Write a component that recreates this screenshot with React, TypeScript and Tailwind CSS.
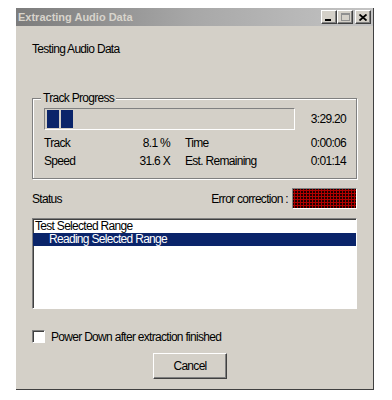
import React from 'react';

const raised =
  'border border-t-white border-l-white border-r-[#404040] border-b-[#404040] shadow-[inset_-1px_-1px_0_#808080]';
const sunken =
  'border border-t-[#808080] border-l-[#808080] border-r-white border-b-white shadow-[inset_1px_1px_0_#404040]';

const TitleButton = ({ children }: { children: React.ReactNode }) => (
  <div className={`w-[16px] h-[14px] bg-[#d4d0c8] flex items-center justify-center ${raised}`}>{children}</div>
);

const App = () => {
  return (
    <div className="w-[392px] h-[400px] bg-white pt-[8px] pl-[16px] font-['Liberation_Sans',Arial,sans-serif] text-[12px] leading-[14px] tracking-[-0.7px] text-black">
      <div className="w-[358px] h-[382px] bg-[#d4d0c8] flex flex-col border-r border-b border-r-[#404040] border-b-[#404040]">
        {/* caption */}
        <div className="h-[18px] flex items-center pl-[2px] pr-[2px] bg-gradient-to-r from-[#7c7c7c] via-[#a8a8a8] to-[#c4c4c4]">
          <span className="font-bold text-[11px] tracking-[0px] text-[#d8d4cc]">Extracting Audio Data</span>
          <div className="ml-auto flex items-center">
            <TitleButton>
              <div className="w-[6px] h-[2px] bg-black mt-[6px] -ml-[2px]" />
            </TitleButton>
            <TitleButton>
              <div className="w-[9px] h-[8px] border border-t-2 border-[#909090]" />
            </TitleButton>
            <div className="w-[2px]" />
            <TitleButton>
              <svg width="8" height="7" viewBox="0 0 8 7">
                <path d="M0.5 0.5 L7.5 6.5 M7.5 0.5 L0.5 6.5" stroke="#000" strokeWidth="1.8" />
              </svg>
            </TitleButton>
          </div>
        </div>

        <div className="flex-1 flex flex-col pl-[16px] pr-[16px]">
          <div className="mt-[16px] h-[14px]">Testing Audio Data</div>

          {/* Track Progress group */}
          <div className="relative mt-[42px] border border-[#808080] shadow-[inset_1px_1px_0_#fff,1px_1px_0_#fff] pt-[9px] pb-[8px] pl-[11px] pr-[10px]">
            <span className="absolute -top-[8px] left-[8px] px-[2px] bg-[#d4d0c8]">Track Progress</span>
            <div className="flex items-center">
              <div className={`w-[251px] h-[22px] bg-[#d4d0c8] flex items-center gap-[2px] pl-[2px] ${sunken} shadow-none`}>
                <div className="w-[12px] h-[18px] bg-[#0a246a]" />
                <div className="w-[12px] h-[18px] bg-[#0a246a]" />
              </div>
              <span className="ml-auto">3:29.20</span>
            </div>
            <div className="flex mt-[4px] leading-[18px]">
              <div className="w-[126px] flex flex-col">
                <div className="flex justify-between"><span>Track</span><span>8.1 %</span></div>
                <div className="flex justify-between"><span>Speed</span><span>31.6 X</span></div>
              </div>
              <div className="flex-1 flex flex-col ml-[15px]">
                <div className="flex justify-between"><span>Time</span><span>0:00:06</span></div>
                <div className="flex justify-between"><span>Est. Remaining</span><span>0:01:14</span></div>
              </div>
            </div>
          </div>

          {/* status row */}
          <div className="flex items-center mt-[9px] h-[21px]">
            <span>Status</span>
            <span className="ml-auto mr-[4px]">Error correction :</span>
            <div
              className={`w-[65px] h-[21px] bg-[#1c0000] bg-[radial-gradient(circle,#b00000_1px,transparent_1.2px)] bg-[length:3px_3px] ${sunken} shadow-none`}
            />
          </div>

          {/* list */}
          <div className={`mt-[9px] h-[91px] bg-white pt-[1px] ${sunken}`}>
            <div className="pl-[2px] leading-[13px]">Test Selected Range</div>
            <div className="pl-[16px] leading-[13px] bg-[#0a246a] text-white">Reading Selected Range</div>
          </div>

          {/* checkbox */}
          <div className="flex items-center mt-[21px] h-[13px]">
            <div className={`w-[13px] h-[13px] bg-white ${sunken}`} />
            <span className="ml-[6px]">Power Down after extraction finished</span>
          </div>

          <button className={`mt-[10px] ml-[121px] w-[74px] h-[26px] bg-[#d4d0c8] flex items-center justify-center ${raised}`}>
            Cancel
          </button>
        </div>
      </div>
    </div>
  );
};

export default App;
